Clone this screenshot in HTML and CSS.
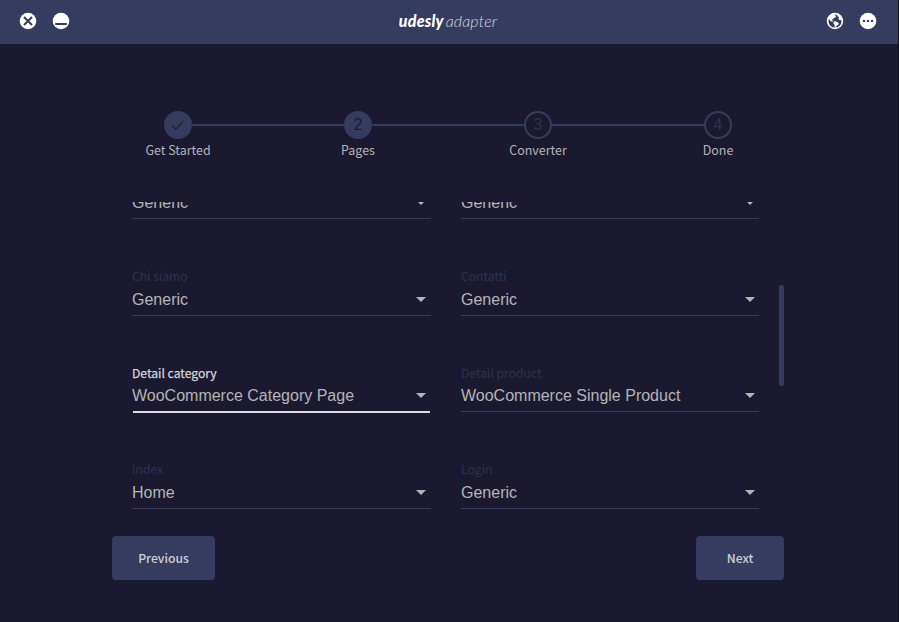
FILE: index.html
```html
<!DOCTYPE html>
<html lang="en">
<head>
<meta charset="utf-8">
<title>udesly adapter</title>
<link rel="stylesheet" href="styles.css">
</head>
<body>
<header class="bar">
  <div class="group">
    <svg class="icon" viewBox="0 0 18 18"><circle cx="9" cy="9" r="8.3" fill="#fff"/><path d="M5 5l8 8M13 5l-8 8" stroke="#363c5f" stroke-width="2"/></svg>
    <svg class="icon" viewBox="0 0 18 18"><circle cx="9" cy="9" r="8.3" fill="#fff"/><path d="M3.2 12h11.6" stroke="#363c5f" stroke-width="2"/></svg>
  </div>
  <div class="logo"><b>udesly</b><span>adapter</span></div>
  <div class="group">
    <svg class="icon" viewBox="0 0 18 18"><circle cx="9" cy="9" r="7.4" fill="none" stroke="#fff" stroke-width="1.7"/><path fill="#fff" d="M2.4 5.6L5 3l4-1.2-.5 1.4 1.5.3-.4 1.7-2 .8-.2 1.3-1.6.3.3 1 1.2.5-.6.7-2.3-.9L3 7.1zM11 2l3.5 2.2L16 7.4l-1 .8-1.6-.3-1-1.5.7-1.5-1.7-.6zM7.8 9.5l2-.3 2.8 1.5-.3 2-1.8 1.1-.9 2-1-.7.1-2.1-1.2-1.6z"/></svg>
    <svg class="icon" viewBox="0 0 18 18"><circle cx="9" cy="9" r="8.3" fill="#fff"/><path d="M3.9 8h2.2v2.1H3.9zM7.9 8h2.2v2.1H7.9zM11.9 8h2.2v2.1h-2.2z" fill="#363c5f"/></svg>
  </div>
</header>
<main>
  <ol class="steps">
    <li><i class="dot full"><svg width="14" height="12" viewBox="0 0 14 12"><path d="M1.5 6.8l3.3 3.3L12.3 2" fill="none" stroke="#1b192f" stroke-width="1.1"/></svg></i>Get Started</li>
    <li><i class="dot full">2</i>Pages</li>
    <li><i class="dot">3</i>Converter</li>
    <li><i class="dot">4</i>Done</li>
  </ol>
  <div class="scroll">
    <div class="fields">
      <div class="field"><div class="value">Generic<s></s></div></div>
      <div class="field"><div class="value">Generic<s></s></div></div>
      <div class="field"><label>Chi siamo</label><div class="value">Generic<s></s></div></div>
      <div class="field"><label>Contatti</label><div class="value">Generic<s></s></div></div>
      <div class="field tight active"><label>Detail category</label><div class="value">WooCommerce Category Page<s></s></div></div>
      <div class="field tight"><label>Detail product</label><div class="value">WooCommerce Single Product<s></s></div></div>
      <div class="field"><label>Index</label><div class="value">Home<s></s></div></div>
      <div class="field"><label>Login</label><div class="value">Generic<s></s></div></div>
    </div>
    <div class="thumb"></div>
  </div>
  <div class="actions"><button class="prev">Previous</button><button class="next">Next</button></div>
</main>
</body>
</html>
```
FILE: styles.css
```css
* { box-sizing: border-box; }
body { margin: 0; height: 622px; overflow: hidden; background: #1b192f; border-right: 1px solid #100f1c; color: #b5b5b5; font: 500 12.15px/20px "Noto Sans CJK SC", sans-serif; }
.bar { height: 44px; padding: 0 21px 2px 19px; display: flex; align-items: center; justify-content: space-between; background: #363c5f; }
.group { display: flex; gap: 15px; }
.icon { width: 18px; height: 18px; display: block; }
.logo { display: flex; gap: 2px; margin-top: -1px; color: #fff; font: italic 300 16px/20px Lato, sans-serif; }
.logo b { font-weight: 900; letter-spacing: .2px; }
.logo span { color: #d7d8df; letter-spacing: .15px; }
.steps { list-style: none; margin: 67px 0 0 88px; padding: 0; width: 720px; display: grid; grid-template-columns: repeat(4, 1fr); font-size: 12.45px; font-weight: 400; }
.steps li { position: relative; display: flex; flex-direction: column; align-items: center; gap: 1px; }
.steps li + li::before { content: ""; position: absolute; top: 13px; left: -76px; width: 152px; height: 2px; background: #363c5f; }
.dot { width: 28px; height: 28px; border: 2px solid #363c5f; border-radius: 50%; display: flex; align-items: center; justify-content: center; color: #2e3356; font: 16px/24px "Liberation Sans", sans-serif; }
.dot.full { background: #363c5f; color: #1b192f; }
.scroll { margin: 42px 0 0 132px; width: 652px; height: 308px; overflow: hidden; display: flex; justify-content: space-between; }
.fields { width: 627px; margin-top: -80px; display: grid; grid-template-columns: 299px 298px; grid-template-rows: 97px 97px 96px 97px; column-gap: 30px; height: 387px; }
.field { display: flex; flex-direction: column; justify-content: flex-end; }
.field label { color: #2d3256; font-weight: 400; line-height: 20px; }
.value { height: 30px; padding-right: 5px; border-bottom: 1px solid #363c5f; display: flex; justify-content: space-between; font: 16px/28px "Liberation Sans", sans-serif; }
.field:nth-child(even) .value { padding-right: 4px; }
.value s { margin-top: 11px; width: 10px; height: 5px; background: #b5b5b5; clip-path: polygon(0 0, 100% 0, 50% 100%); }
.tight label { margin-bottom: -1px; }
.active label { color: #d5d5d9; -webkit-text-stroke: .25px #d5d5d9; }
.active .value { position: relative; border-color: transparent; }
.active .value::after { content: ""; position: absolute; left: 1px; right: 1px; top: 29px; height: 2px; background: #dcdce0; }
.thumb { width: 5px; height: 101px; margin-top: 83px; border-radius: 2px; background: #363c5f; }
.actions { margin: 26px 114px 0 112px; display: flex; justify-content: space-between; }
button { height: 44px; padding: 0; border: 0; border-radius: 4px; background: #363c5f; color: #d0d0d4; font: inherit; }
.prev { width: 103px; }
.next { width: 88px; }
```
